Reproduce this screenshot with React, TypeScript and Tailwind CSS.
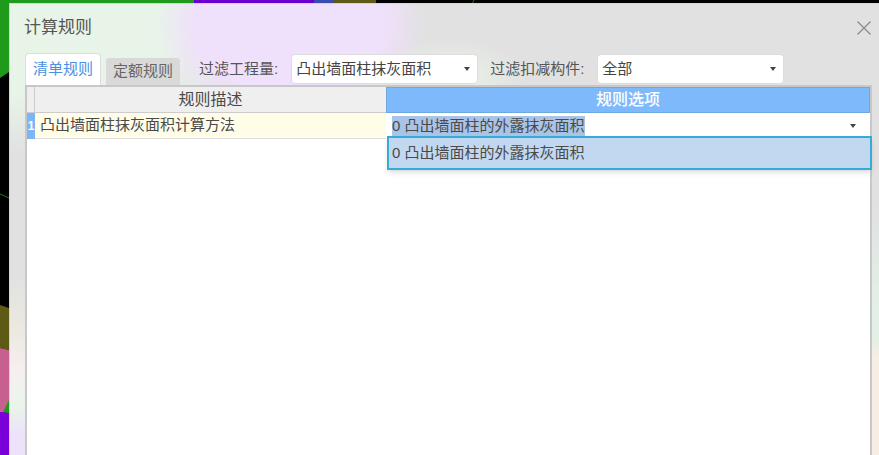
const RULE_TEXT = '凸出墙面柱抹灰面积计算方法'
const OPTION_TEXT = '0 凸出墙面柱的外露抹灰面积'

function Caret() {
  return <span className="h-0 w-0 border-x-[3px] border-t-[4px] border-x-transparent border-t-[#444]" />
}

function FilterSelect({ value }: { value: string }) {
  return (
    <div className="flex h-[30px] w-[187px] items-center justify-between rounded-[4px] border border-[#ddd] bg-white pl-[4px] pr-[7px] text-[15px] text-[#444]">
      <span>{value}</span>
      <Caret />
    </div>
  )
}

// what shows round the dialog's edges
function Backdrop() {
  return (
    <svg className="absolute inset-0" width="879" height="455" viewBox="0 0 879 455">
      <rect width="879" height="455" fill="#000" />
      <polygon points="0,0 194,0 194,10 60,30 9,72 0,78" fill="#1f9a1a" />
      <rect x="194" y="0" width="120" height="5" fill="#6a00d0" />
      <rect x="314" y="0" width="20" height="5" fill="#3a4ab0" />
      <rect x="334" y="0" width="42" height="5" fill="#5c5a14" />
      <path d="M0 194L9 198" stroke="#1f7a1a" strokeWidth="1" fill="none" />
      <path d="M474 0L472 4" stroke="#1f7a1a" strokeWidth="1" fill="none" />
      <polygon points="0,305 9,308 9,350 0,348" fill="#5c5a14" />
      <polygon points="0,348 9,350 9,412 0,412" fill="#c8608f" />
      <polygon points="0,412 9,412 9,455 0,455" fill="#7a00d8" />
      <polygon points="3,412 9,400 9,413" fill="#1f9a1a" />
    </svg>
  )
}

export default function App() {
  return (
    <div className="relative h-[455px] w-[879px] overflow-hidden bg-black font-['Liberation_Sans','Noto_Sans_CJK_SC',sans-serif]">
      <Backdrop />
      <div className="absolute left-[9px] top-[3px] flex h-[452px] w-[870px] flex-col border-l border-t border-[#d4d4d4] pl-[15px] pr-[7px] [background:linear-gradient(to_bottom,transparent_270px,#ebe9e0_325px,#f7eef0_365px,#eaf5ea_400px,#ece2fa_432px)_left/16px_100%_no-repeat,linear-gradient(to_bottom,transparent_200px,#e3f0e6_300px,#e3f0e6_335px,#f8ede3_355px)_right/8px_100%_no-repeat,radial-gradient(ellipse_75px_38px_at_440px_72px,#eaf3e6,transparent),radial-gradient(ellipse_135px_100px_at_280px_20px,#efe0fb_70%,transparent),radial-gradient(ellipse_270px_150px_at_20px_0px,#e8f4e8_60%,transparent),#e1e1e1]">
        <div className="flex h-[48px] items-center justify-between">
          <span className="-ml-[1px] text-[17px] text-[#555]">计算规则</span>
          <svg width="14" height="14" viewBox="0 0 14 14" className="mr-[1px]">
            <path d="M0.5 0.5L13.5 13.5M13.5 0.5L0.5 13.5" stroke="#8a8a8a" strokeWidth="1.3" fill="none" />
          </svg>
        </div>
        <div className="flex h-[33px] items-end">
          <div className="flex h-[32px] w-[76px] items-center justify-center rounded-t-[4px] border border-b-0 border-[#ddd] bg-white text-[15px] text-[#4a90e2]">清单规则</div>
          <div className="ml-[5px] flex h-[27px] w-[74px] items-center justify-center rounded-t-[3px] bg-[#d9d9d9] text-[15px] text-[#666]">定额规则</div>
          <div className="mb-[1px] ml-[19px] flex items-center text-[15px] text-[#555]">
            <span className="mr-[13px]">过滤工程量:</span>
            <FilterSelect value="凸出墙面柱抹灰面积" />
            <span className="ml-[12px] mr-[13px]">过滤扣减构件:</span>
            <FilterSelect value="全部" />
          </div>
        </div>
        <div className="relative flex flex-1 flex-col border-2 border-b-0 border-[#c8c8c8] bg-white text-[15px] text-[#4a4a4a]">
          <div className="flex h-[26px]">
            <div className="w-[8px] border-r border-b border-[#ccc] bg-[#efefef]" />
            <div className="flex w-[351px] items-center justify-center border-b border-[#ccc] bg-[#efefef] text-[16px]">规则描述</div>
            <div className="flex flex-1 items-center justify-center border border-[#6fa8dc] bg-[#7db9fb] text-[16px] font-medium text-white">规则选项</div>
          </div>
          <div className="flex h-[26px]">
            <div className="flex w-[8px] items-center justify-center bg-[#7db5f5] text-[12px] font-bold text-white">1</div>
            <div className="flex w-[351px] items-center border-b border-[#ddd] bg-[#fffce8] pl-[5px]">{RULE_TEXT}</div>
            <div className="flex flex-1 items-center justify-between bg-white pl-[6px] pr-[14px]">
              <span className="bg-[#a9c4e6] leading-[20px]">{OPTION_TEXT}</span>
              <Caret />
            </div>
          </div>
          <div className="absolute left-[360px] top-[49px] flex h-[34px] w-[485px] items-center border-2 border-[#35abd8] bg-[#c1d8f0] pl-[3px] shadow-md">
            {OPTION_TEXT}
          </div>
        </div>
      </div>
    </div>
  )
}
